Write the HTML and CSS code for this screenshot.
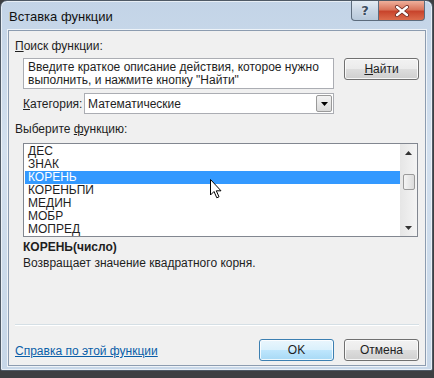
FILE: index.html
```html
<!DOCTYPE html>
<html lang="ru">
<head>
    <meta charset="UTF-8">
    <title>Вставка функции</title>
    <link rel="stylesheet" href="styles.css">
</head>
<body>
    <div class="window">
        <div class="titlebar">
            <span class="title">Вставка функции</span>
            <div class="caption-buttons">
                <span class="cap-btn help">?</span>
                <span class="cap-btn close">
                    <svg width="16" height="12" viewBox="0 0 16 12">
                        <path d="M3 2 L13 10 M13 2 L3 10" stroke="#6b2a22" stroke-width="4" stroke-linecap="round"/>
                        <path d="M3 2 L13 10 M13 2 L3 10" stroke="#fff" stroke-width="2.4" stroke-linecap="round"/>
                    </svg>
                </span>
            </div>
        </div>

        <div class="client">
            <div class="label"><u>П</u>оиск функции:</div>

            <div class="search-row">
                <div class="search-box">Введите краткое описание действия, которое нужно выполнить, и нажмите кнопку "Найти"</div>
                <button class="btn"><u>Н</u>айти</button>
            </div>

            <div class="category-row">
                <span class="cat-label"><u>К</u>атегория:</span>
                <div class="combo">
                    <span class="combo-value">Математические</span>
                    <span class="combo-arrow">
                        <svg width="7" height="4" viewBox="0 0 7 4"><path d="M0 0 H7 L3.5 4 Z" fill="#000"/></svg>
                    </span>
                </div>
            </div>

            <div class="label list-label">Выберите <u>ф</u>ункцию:</div>

            <div class="listbox">
                <ul class="items">
                    <li>ДЕС</li>
                    <li>ЗНАК</li>
                    <li class="selected">КОРЕНЬ</li>
                    <li>КОРЕНЬПИ</li>
                    <li>МЕДИН</li>
                    <li>МОБР</li>
                    <li>МОПРЕД</li>
                </ul>
                <div class="scrollbar">
                    <svg class="arrow" width="7" height="4" viewBox="0 0 7 4"><path d="M0 4 H7 L3.5 0 Z" fill="#333"/></svg>
                    <div class="thumb"></div>
                    <svg class="arrow" width="7" height="4" viewBox="0 0 7 4"><path d="M0 0 H7 L3.5 4 Z" fill="#333"/></svg>
                </div>
            </div>

            <div class="signature">КОРЕНЬ(число)</div>
            <div class="description">Возвращает значение квадратного корня.</div>

            <div class="separator"></div>

            <div class="footer">
                <a href="#" class="help-link">Справка по этой функции</a>
                <div class="footer-buttons">
                    <button class="btn default">OK</button>
                    <button class="btn">Отмена</button>
                </div>
            </div>
        </div>
    </div>

    <svg class="cursor" width="13" height="20" viewBox="0 0 13 20">
        <path d="M0.5 0.5 V16 L4 12.5 L6.8 18.8 L9 17.8 L6.3 11.8 H11 Z" fill="#fff" stroke="#000" stroke-width="1"/>
    </svg>
</body>
</html>
```

FILE: styles.css
```css
body {
    margin: 0;
    width: 434px;
    height: 378px;
    background: #3d3f42;
    font-family: "Liberation Sans", Arial, sans-serif;
    font-size: 12px;
    color: #1e1e1e;
    position: relative;
    overflow: hidden;
}

.window {
    width: 433px;
    height: 371px;
    box-sizing: border-box;
    border: 1px solid #4f5a66;
    border-radius: 7px 7px 2px 2px;
    background: linear-gradient(180deg, #c3d4e7 0%, #d3e0ee 40%, #c7d7e8 100%);
    display: flex;
    flex-direction: column;
    padding: 0 6px 4px 7px;
    box-shadow: inset 0 0 0 1px rgba(255, 255, 255, 0.6);
}

.titlebar {
    height: 29px;
    display: flex;
    justify-content: space-between;
    align-items: flex-start;
}

.title {
    font-size: 13px;
    margin-top: 8px;
    margin-left: 1px;
    color: #111;
}

.caption-buttons {
    display: flex;
    margin-right: 1px;
}

.cap-btn {
    height: 20px;
    display: flex;
    align-items: center;
    justify-content: center;
    border: 1px solid #5c6b7c;
    border-top: none;
    box-sizing: border-box;
}

.help {
    width: 28px;
    border-radius: 0 0 0 4px;
    background: linear-gradient(180deg, #e3ebf3 0%, #c9d6e4 50%, #b7c8da 100%);
    color: #3d4d5e;
    font-family: "DejaVu Sans", sans-serif;
    font-size: 13px;
    font-weight: bold;
    text-shadow: 0 0 2px #fff;
}

.close {
    width: 46px;
    border-left: none;
    border-radius: 0 0 4px 0;
    background: linear-gradient(180deg, #eeb09c 0%, #d9755c 45%, #c8442c 55%, #dc6c4c 100%);
}

.client {
    flex: 1;
    background: #f0f0f0;
    border: 1px solid #8c9cb0;
    box-shadow: 0 0 0 1px rgba(255, 255, 255, 0.7);
    display: flex;
    flex-direction: column;
    padding: 0 6px 0 6px;
}

.label {
    margin-top: 8px;
    height: 14px;
    line-height: 14px;
}

.search-row {
    display: flex;
    justify-content: space-between;
    align-items: flex-start;
    margin-top: 5px;
    padding-left: 8px;
}

.search-box {
    width: 311px;
    height: 31px;
    box-sizing: border-box;
    background: #fff;
    border: 1px solid #abadb3;
    padding: 2px 4px;
    line-height: 13px;
}

.btn {
    width: 75px;
    height: 22px;
    font-family: inherit;
    font-size: 12px;
    color: #1e1e1e;
    border: 1px solid #707070;
    border-radius: 3px;
    background: linear-gradient(180deg, #f2f2f2 0%, #ebebeb 50%, #dddddd 51%, #cfcfcf 100%);
    box-shadow: inset 0 0 0 1px rgba(255, 255, 255, 0.8);
    padding: 0;
}

.btn.default {
    border-color: #3c7fb1;
    background: linear-gradient(180deg, #eaf6fd 0%, #d9f0fc 50%, #bee6fd 51%, #a7d9f5 100%);
}

.category-row {
    display: flex;
    align-items: center;
    margin-top: 4px;
    padding-left: 8px;
}

.cat-label {
    width: 61px;
}

.combo {
    width: 250px;
    height: 21px;
    box-sizing: border-box;
    background: #fff;
    border: 1px solid #abadb3;
    display: flex;
    align-items: center;
    justify-content: space-between;
}

.combo-value {
    padding-left: 3px;
}

.combo-arrow {
    width: 16px;
    height: 17px;
    margin-right: 1px;
    box-sizing: border-box;
    border: 1px solid #9a9a9a;
    border-radius: 2px;
    background: linear-gradient(180deg, #f3f3f3 0%, #dadada 100%);
    display: flex;
    align-items: center;
    justify-content: center;
}

.list-label {
    margin-top: 8px;
}

.listbox {
    margin: 7px 0 0 8px;
    width: 395px;
    height: 94px;
    box-sizing: border-box;
    background: #fff;
    border: 1px solid #828790;
    display: flex;
    justify-content: space-between;
}

.items {
    list-style: none;
    margin: 1px 0 0 1px;
    padding: 0;
    flex: 1;
}

.items li {
    height: 13px;
    line-height: 13px;
    padding-left: 3px;
}

.items li.selected {
    background: #3399ff;
    color: #fff;
}

.scrollbar {
    width: 17px;
    background: linear-gradient(90deg, #e6e6e6 0%, #f4f4f4 100%);
    display: flex;
    flex-direction: column;
    align-items: center;
    padding: 7px 0 6px 0;
    box-sizing: border-box;
}

.thumb {
    width: 12px;
    height: 16px;
    margin-top: 19px;
    margin-bottom: auto;
    box-sizing: border-box;
    border: 1px solid #9a9a9a;
    border-radius: 2px;
    background: linear-gradient(90deg, #f4f4f4 0%, #dcdcdc 100%);
}

.signature {
    margin: 3px 0 0 8px;
    font-weight: bold;
    line-height: 14px;
}

.description {
    margin: 2px 0 0 8px;
    line-height: 14px;
}

.separator {
    margin-top: 54px;
    border-top: 1px solid #d5dfe5;
    border-bottom: 1px solid #fff;
}

.footer {
    display: flex;
    justify-content: space-between;
    align-items: center;
    margin-top: 13px;
}

.help-link {
    color: #0a5ea8;
    margin-top: 2px;
}

.footer-buttons {
    display: flex;
    gap: 10px;
    margin-right: 0;
}

.cursor {
    position: absolute;
    left: 210px;
    top: 179px;
}
```
